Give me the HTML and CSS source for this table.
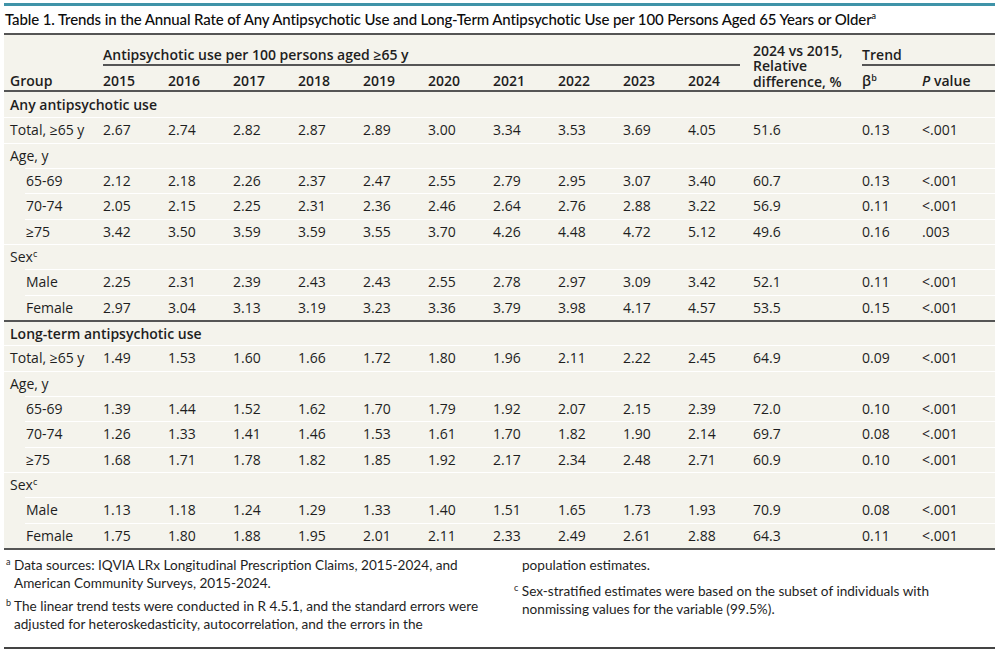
FILE: index.html
```html
<!DOCTYPE html>
<html lang="en">
<head>
<meta charset="utf-8">
<title>Table 1</title>
<link rel="stylesheet" href="styles.css">
</head>
<body>
<div class="page">
  <div class="rule-top"></div>
  <h1 class="caption">Table 1. Trends in the Annual Rate of Any Antipsychotic Use and Long-Term Antipsychotic Use per 100 Persons Aged 65 Years or Older<sup>a</sup></h1>
  <table class="data">
    <colgroup>
      <col class="c-group">
      <col class="c-year"><col class="c-year"><col class="c-year"><col class="c-year"><col class="c-year">
      <col class="c-year"><col class="c-year"><col class="c-year"><col class="c-year"><col class="c-year">
      <col class="c-rel">
      <col class="c-beta">
      <col class="c-p">
    </colgroup>
    <thead>
      <tr class="hrow1">
        <th rowspan="2" class="h-group">Group</th>
        <th colspan="10" class="h-span"><div class="span-label">Antipsychotic use per 100 persons aged ≥65 y</div></th>
        <th rowspan="2" class="h-rel">2024 vs 2015,<br>Relative<br>difference, %</th>
        <th colspan="2" class="h-span h-trend"><div class="span-label">Trend</div></th>
      </tr>
      <tr class="hrow2">
        <th>2015</th><th>2016</th><th>2017</th><th>2018</th><th>2019</th>
        <th>2020</th><th>2021</th><th>2022</th><th>2023</th><th>2024</th>
        <th>β<sup>b</sup></th><th><i>P</i> value</th>
      </tr>
    </thead>
    <tbody>
      <tr class="first"><td class="section" colspan="14">Any antipsychotic use</td></tr>
      <tr><td>Total, ≥65 y</td><td>2.67</td><td>2.74</td><td>2.82</td><td>2.87</td><td>2.89</td><td>3.00</td><td>3.34</td><td>3.53</td><td>3.69</td><td>4.05</td><td>51.6</td><td>0.13</td><td>&lt;.001</td></tr>
      <tr><td colspan="14">Age, y</td></tr>
      <tr class="sub"><td>65-69</td><td>2.12</td><td>2.18</td><td>2.26</td><td>2.37</td><td>2.47</td><td>2.55</td><td>2.79</td><td>2.95</td><td>3.07</td><td>3.40</td><td>60.7</td><td>0.13</td><td>&lt;.001</td></tr>
      <tr class="sub"><td>70-74</td><td>2.05</td><td>2.15</td><td>2.25</td><td>2.31</td><td>2.36</td><td>2.46</td><td>2.64</td><td>2.76</td><td>2.88</td><td>3.22</td><td>56.9</td><td>0.11</td><td>&lt;.001</td></tr>
      <tr class="sub"><td>≥75</td><td>3.42</td><td>3.50</td><td>3.59</td><td>3.59</td><td>3.55</td><td>3.70</td><td>4.26</td><td>4.48</td><td>4.72</td><td>5.12</td><td>49.6</td><td>0.16</td><td>.003</td></tr>
      <tr><td colspan="14">Sex<sup>c</sup></td></tr>
      <tr class="sub"><td>Male</td><td>2.25</td><td>2.31</td><td>2.39</td><td>2.43</td><td>2.43</td><td>2.55</td><td>2.78</td><td>2.97</td><td>3.09</td><td>3.42</td><td>52.1</td><td>0.11</td><td>&lt;.001</td></tr>
      <tr class="sub"><td>Female</td><td>2.97</td><td>3.04</td><td>3.13</td><td>3.19</td><td>3.23</td><td>3.36</td><td>3.79</td><td>3.98</td><td>4.17</td><td>4.57</td><td>53.5</td><td>0.15</td><td>&lt;.001</td></tr>
    </tbody>
    <tbody>
      <tr class="sec-start"><td class="section" colspan="14">Long-term antipsychotic use</td></tr>
      <tr><td>Total, ≥65 y</td><td>1.49</td><td>1.53</td><td>1.60</td><td>1.66</td><td>1.72</td><td>1.80</td><td>1.96</td><td>2.11</td><td>2.22</td><td>2.45</td><td>64.9</td><td>0.09</td><td>&lt;.001</td></tr>
      <tr><td colspan="14">Age, y</td></tr>
      <tr class="sub"><td>65-69</td><td>1.39</td><td>1.44</td><td>1.52</td><td>1.62</td><td>1.70</td><td>1.79</td><td>1.92</td><td>2.07</td><td>2.15</td><td>2.39</td><td>72.0</td><td>0.10</td><td>&lt;.001</td></tr>
      <tr class="sub"><td>70-74</td><td>1.26</td><td>1.33</td><td>1.41</td><td>1.46</td><td>1.53</td><td>1.61</td><td>1.70</td><td>1.82</td><td>1.90</td><td>2.14</td><td>69.7</td><td>0.08</td><td>&lt;.001</td></tr>
      <tr class="sub"><td>≥75</td><td>1.68</td><td>1.71</td><td>1.78</td><td>1.82</td><td>1.85</td><td>1.92</td><td>2.17</td><td>2.34</td><td>2.48</td><td>2.71</td><td>60.9</td><td>0.10</td><td>&lt;.001</td></tr>
      <tr><td colspan="14">Sex<sup>c</sup></td></tr>
      <tr class="sub"><td>Male</td><td>1.13</td><td>1.18</td><td>1.24</td><td>1.29</td><td>1.33</td><td>1.40</td><td>1.51</td><td>1.65</td><td>1.73</td><td>1.93</td><td>70.9</td><td>0.08</td><td>&lt;.001</td></tr>
      <tr class="sub"><td>Female</td><td>1.75</td><td>1.80</td><td>1.88</td><td>1.95</td><td>2.01</td><td>2.11</td><td>2.33</td><td>2.49</td><td>2.61</td><td>2.88</td><td>64.3</td><td>0.11</td><td>&lt;.001</td></tr>
    </tbody>
  </table>
  <div class="notes">
    <div class="notes-col">
      <p class="note"><sup>a</sup> Data sources: IQVIA LRx Longitudinal Prescription Claims, 2015-2024, and American Community Surveys, 2015-2024.</p>
      <p class="note"><sup>b</sup> The linear trend tests were conducted in R 4.5.1, and the standard errors were adjusted for heteroskedasticity, autocorrelation, and the errors in the</p>
    </div>
    <div class="notes-col">
      <p class="note cont">population estimates.</p>
      <p class="note"><sup>c</sup> Sex-stratified estimates were based on the subset of individuals with nonmissing values for the variable (99.5%).</p>
    </div>
  </div>
</div>
</body>
</html>
```

FILE: styles.css
```css
* { box-sizing: border-box; }
html, body { margin: 0; padding: 0; background: #fff; }
body { color: #1e1e1e; font-family: "Open Sans", "DejaVu Sans", sans-serif; }

.page { width: 995px; padding-left: 4px; }

.rule-top { height: 3px; background: #3f93a8; margin-top: 3px; }

.caption {
  margin: 0;
  padding: 3px 0 0 1px;
  height: 27px;
  font-family: "Lato", "Open Sans", sans-serif;
  font-weight: 500;
  font-size: 15px;
  letter-spacing: -0.12px;
  line-height: 20px;
  color: #0c0c0c;
  white-space: nowrap;
}
.caption sup { font-size: 9px; vertical-align: 6px; line-height: 0; }

.data {
  width: 991px;
  table-layout: fixed;
  border-collapse: separate;
  border-spacing: 0;
  background: #f4f3ec;
  border-top: 2px solid #555;
  border-bottom: 2px solid #555;
  font-size: 14px;
}
.c-group { width: 93px; }
.c-year { width: 65px; }
.c-rel { width: 109px; }
.c-beta { width: 60px; }
.c-p { width: 79px; }

.data th, .data td {
  text-align: left;
  padding: 0 6px;
  white-space: nowrap;
}
.data th { font-weight: 600; vertical-align: bottom; line-height: 16px; }
.data th sup, .data td sup { font-size: 9px; vertical-align: 5px; line-height: 0; font-weight: 600; }
.data td sup { font-weight: 400; }

.hrow1 th { height: 31px; padding-bottom: 0; }
.hrow2 th { height: 26px; padding-bottom: 1px; border-bottom: 2px solid #555; }
.h-group, .h-rel { border-bottom: 2px solid #555; padding-bottom: 1px !important; }
.h-rel { line-height: 15.5px !important; }
.span-label { border-bottom: 2px solid #555; padding-bottom: 1px; }
.h-span { padding-right: 7px !important; }
.h-trend { padding-right: 0 !important; }
.hrow2 th i { font-style: italic; }

.data td {
  height: 25.33px;
  line-height: 16px;
  border-top: 1px solid #fff;
  vertical-align: middle;
}
.data tr.first td { border-top-color: transparent; }
.data tr.sec-start td { border-top: 2px solid #555; }
.data td.section { font-weight: 600; }

.data tr.sub td:first-child {
  padding-left: 22px;
  border-top-color: transparent;
  background-image: linear-gradient(#fff, #fff);
  background-origin: border-box;
  background-repeat: no-repeat;
  background-position: right top;
  background-size: calc(100% - 21px) 1px;
}

.notes {
  width: 991px;
  height: 99px;
  padding: 6px 0 0 2px;
  display: grid;
  grid-template-columns: 481px 481px;
  column-gap: 27px;
  border-bottom: 2px solid #444;
  font-family: "Lato", "Open Sans", sans-serif;
  font-size: 13.6px;
  line-height: 18px;
  color: #1e1e1e;
}
.note {
  margin: 0 0 5px;
  padding-left: 8px;
  text-indent: -8px;
}
.note.cont { text-indent: 0; margin-bottom: 8px; }
.note sup { font-size: 9px; vertical-align: 5px; line-height: 0; }
```
